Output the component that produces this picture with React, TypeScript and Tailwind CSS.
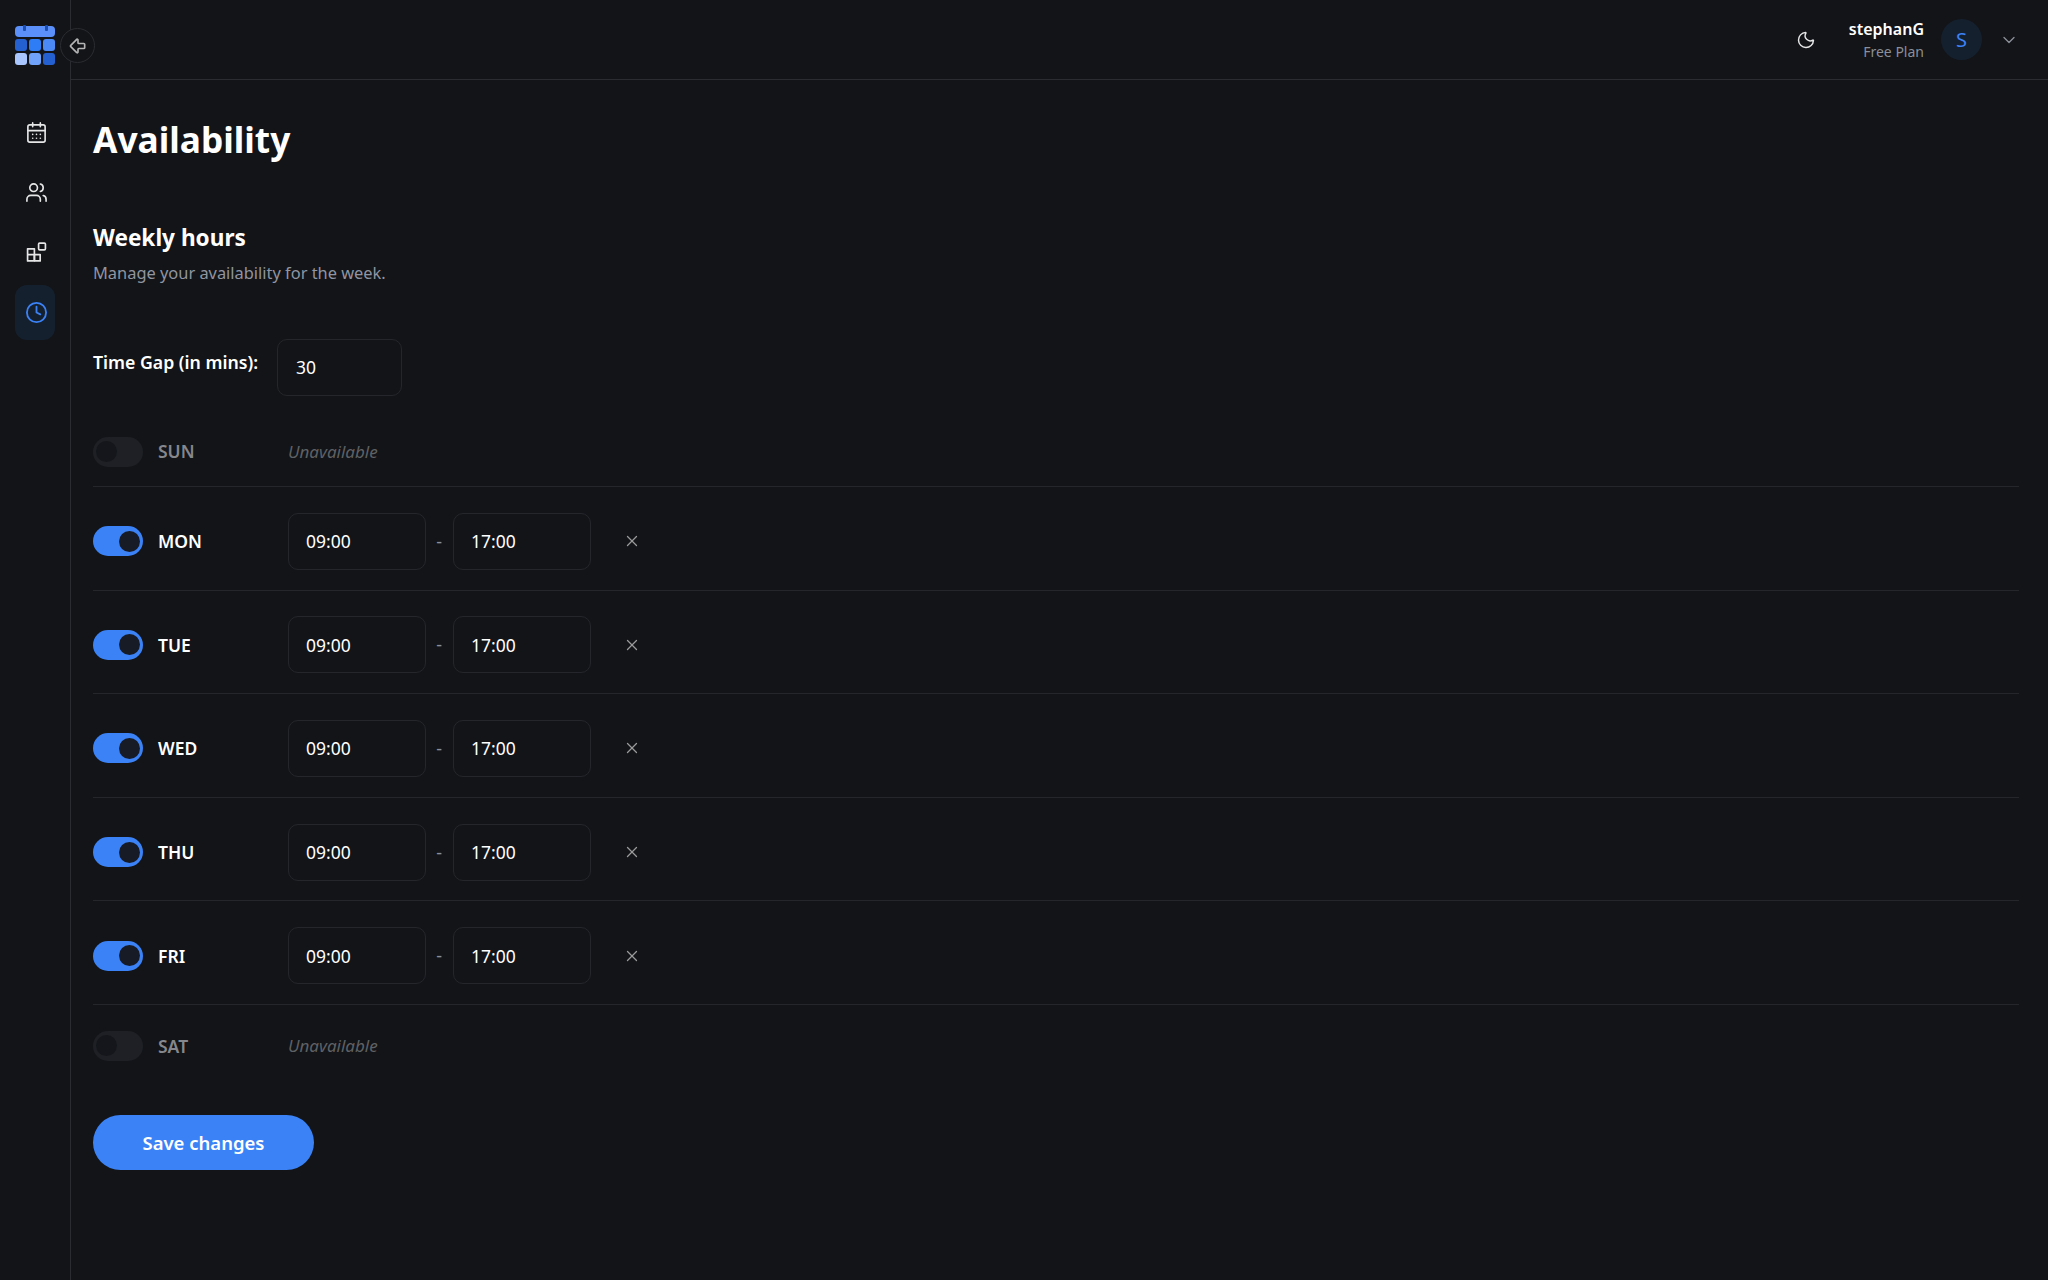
import { ArrowBigLeft, CalendarDays, ChevronDown, Clock, Moon, Users, X } from "lucide-react";

const DAYS = [
  { label: "SUN", on: false },
  { label: "MON", on: true },
  { label: "TUE", on: true },
  { label: "WED", on: true },
  { label: "THU", on: true },
  { label: "FRI", on: true },
  { label: "SAT", on: false },
];

function Logo() {
  return (
    <svg width="40" height="40" viewBox="0 0 40 40">
      <rect x="0" y="1" width="40" height="11" rx="4" fill="#5b90fb" />
      <rect x="8" y="0" width="3" height="6" rx="1" fill="#1d4fb0" />
      <rect x="30" y="0" width="3" height="6" rx="1" fill="#1d4fb0" />
      <rect x="0" y="14" width="12" height="12" rx="3" fill="#2560d0" />
      <rect x="14" y="14" width="12" height="12" rx="3" fill="#2f7df6" />
      <rect x="28" y="14" width="12" height="12" rx="3" fill="#4b89f6" />
      <rect x="0" y="28" width="12" height="12" rx="3" fill="#a9c6ff" />
      <rect x="14" y="28" width="12" height="12" rx="3" fill="#6fa2f8" />
      <rect x="28" y="28" width="12" height="12" rx="3" fill="#2560d0" />
    </svg>
  );
}

function BlocksIcon() {
  return (
    <svg width="21" height="21" viewBox="0 0 20 20" fill="none" stroke="currentColor" strokeWidth="1.6" strokeLinejoin="round">
      <path d="M1.5 6.5h6.5v11.5h-6.5z" />
      <path d="M1.5 12h12v6h-5.5" />
      <path d="M8 12V18" />
      <rect x="12" y="1" width="6.5" height="6.5" rx="1" />
    </svg>
  );
}

function Toggle({ on }: { on: boolean }) {
  return (
    <div className={`flex h-[30px] w-[50px] shrink-0 items-center rounded-full px-[3px] ${on ? "justify-end bg-[#3b82f6]" : "justify-start bg-[#1e2025]"}`}>
      <div className={`h-[21px] w-[21px] rounded-full ${on ? "bg-[#171b26]" : "bg-[#14161b]"}`} />
    </div>
  );
}

function TimeBox({ value }: { value: string }) {
  return (
    <div className="flex h-[57px] w-[137.5px] items-center rounded-[10px] border border-[#24262b] pl-[17px] text-[17.5px] text-white">
      {value}
    </div>
  );
}

export default function App() {
  return (
    <div className="relative flex h-[1280px] w-[2048px] overflow-hidden bg-[#121418] font-['Noto_Sans',sans-serif] text-white">
      {/* Sidebar */}
      <aside className="flex w-[71px] shrink-0 flex-col items-center border-r border-[#2a2c31]">
        <div className="mt-[25px] mb-[37px]">
          <Logo />
        </div>
        <div className="flex h-[60px] w-10 items-center justify-center pl-[2px] text-[#e6e6e6]">
          <CalendarDays size={23} strokeWidth={1.7} />
        </div>
        <div className="flex h-[60px] w-10 items-center justify-center pl-[2px] text-[#e6e6e6]">
          <Users size={23} strokeWidth={1.7} />
        </div>
        <div className="flex h-[60px] w-10 items-center justify-center pl-[2px] text-[#e6e6e6]">
          <BlocksIcon />
        </div>
        <div className="mt-[3px] flex h-[55px] w-10 items-center justify-center rounded-xl bg-[#15202f] pl-[2px] text-[#3b82f6]">
          <Clock size={23} strokeWidth={1.9} />
        </div>
      </aside>

      {/* Collapse button */}
      <button className="absolute top-[28px] left-[60px] flex h-[35px] w-[35px] items-center justify-center rounded-full border border-[#2a2c31] bg-[#121418] text-[#b4b4b4]">
        <ArrowBigLeft size={20} strokeWidth={2} />
      </button>

      <main className="flex min-w-0 flex-1 flex-col">
        {/* Top bar */}
        <header className="flex h-20 shrink-0 items-center justify-end border-b border-[#2a2c31] pr-[29px]">
          <Moon size={20} strokeWidth={1.7} className="mr-[33px] text-[#e6e6e6]" />
          <div className="mr-[17px] flex flex-col items-end">
            <span className="text-[16px] leading-[24px] font-semibold">stephanG</span>
            <span className="text-[14px] leading-[22px] text-[#8b8f98]">Free Plan</span>
          </div>
          <div className="flex h-[41px] w-[41px] items-center justify-center rounded-full bg-[#15202f] text-[20px] text-[#3b82f6]">
            S
          </div>
          <ChevronDown size={20} strokeWidth={1.6} className="ml-[17px] text-[#8b8f98]" />
        </header>

        <div className="flex-1 pt-[33px] pr-[29px] pl-[22px]">
          <h1 className="text-[35.3px] leading-[52px] font-bold">Availability</h1>

          <h2 className="mt-[56px] text-[22.6px] leading-[34px] font-bold">Weekly hours</h2>
          <p className="mt-[5px] text-[16.4px] leading-[26px] text-[#9095a0]">Manage your availability for the week.</p>

          <div className="mt-[53px] flex items-start">
            <label className="mt-[10px] w-[184px] text-[17.7px] leading-[26px] font-semibold">Time Gap (in mins):</label>
            <div className="flex h-[57px] w-[125px] items-center rounded-[10px] border border-[#24262b] pl-[18px] text-[17.5px]">30</div>
          </div>

          <div className="mt-[21px] flex flex-col">
            {DAYS.map((d) => (
              <div
                key={d.label}
                className={`flex items-center ${d.label === "SUN" ? "h-[70px] border-b border-[#24262b]" : d.label === "SAT" ? "h-[82px]" : "h-[103.6px] border-b border-[#24262b] pt-[6px]"}`}
              >
                <Toggle on={d.on} />
                <span className={`ml-[15px] w-[130px] text-[17.5px] font-semibold ${d.on ? "text-white" : "text-[#85878c]"}`}>
                  {d.label}
                </span>
                <div className="flex items-center">
                  {d.on ? (
                    <>
                      <TimeBox value="09:00" />
                      <span className="w-[27.5px] text-center text-[18px] text-[#8b8f98]">-</span>
                      <TimeBox value="17:00" />
                      <X size={18} strokeWidth={1.75} className="ml-[32px] text-[#9a9a9a]" />
                    </>
                  ) : (
                    <span className="text-[17px] text-[#5f6165] italic">Unavailable</span>
                  )}
                </div>
              </div>
            ))}
          </div>

          <button className="mt-[28px] h-[55px] w-[221px] rounded-full bg-[#3b82f6] text-[18.5px] font-semibold text-white">
            Save changes
          </button>
        </div>
      </main>
    </div>
  );
}
